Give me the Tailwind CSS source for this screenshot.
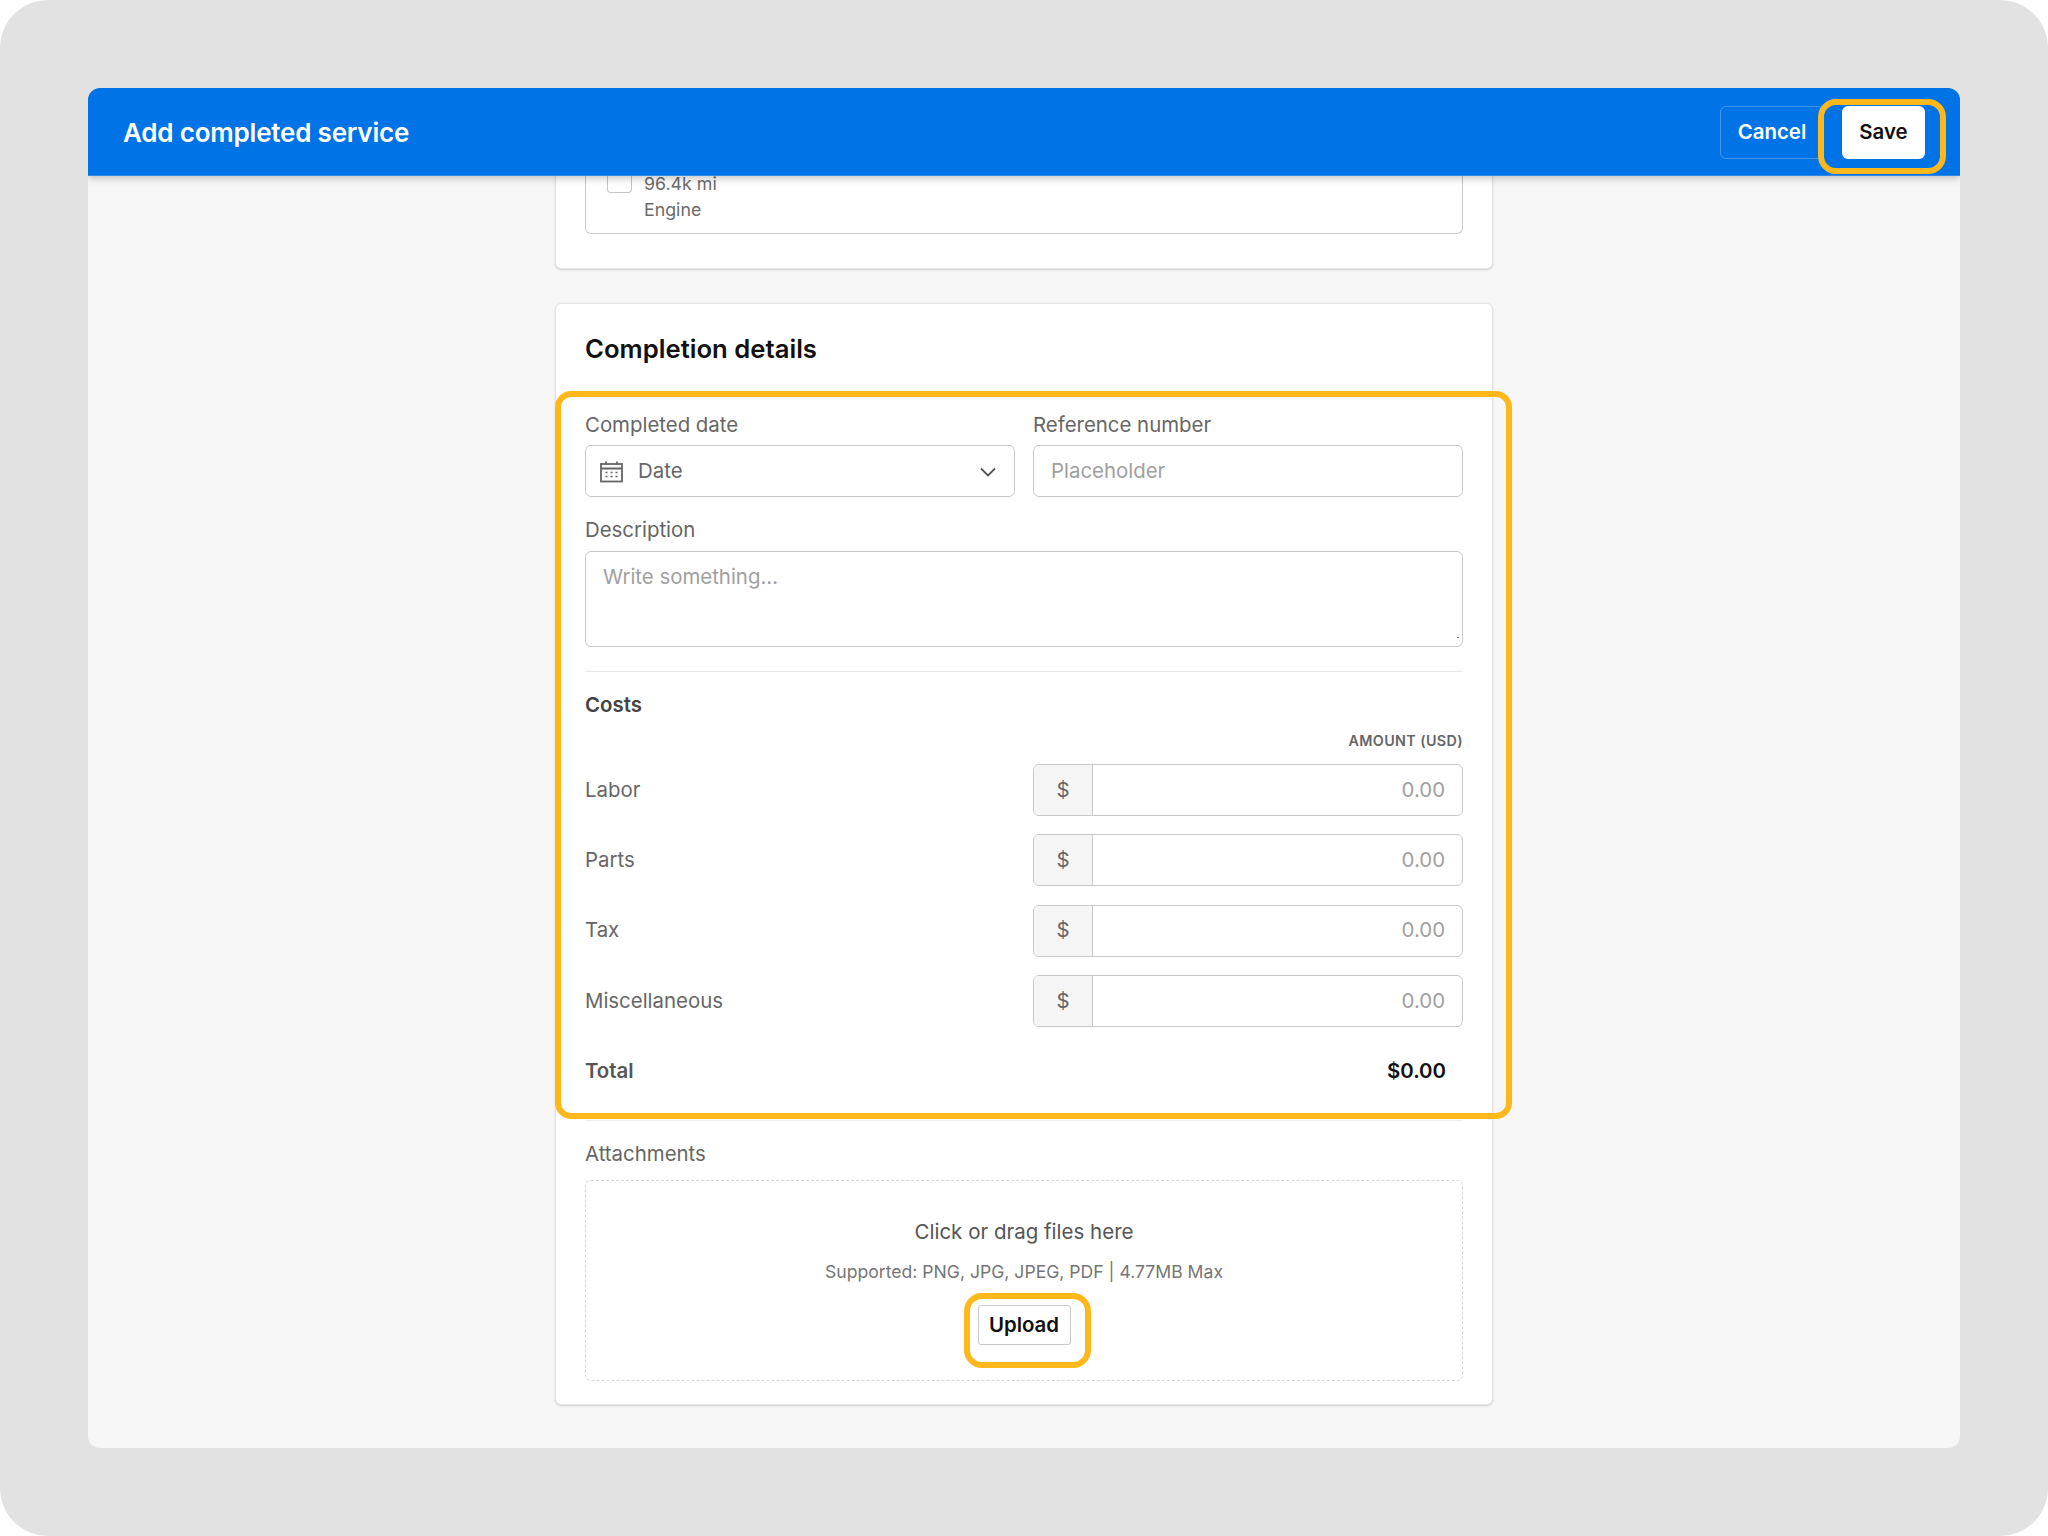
<!DOCTYPE html>
<html lang="en">
<head>
  <meta charset="UTF-8" />
  <title>Add completed service</title>
  <script src="https://cdn.jsdelivr.net/npm/@tailwindcss/browser@4"></script>
</head>
<body class="bg-white font-['Inter',sans-serif]">
  <div class="relative w-[2048px] h-[1536px] rounded-[48px] bg-[#e2e2e2] p-[88px]">
    <div class="flex flex-col w-[1872px] h-[1360px] rounded-[12px] bg-[#f7f7f7] overflow-hidden">
      <header class="relative z-10 flex items-center justify-between shrink-0 h-[88px] bg-[#0073e6] border-b border-[#2f8aeb] pt-px pl-[35px] pr-[35px] shadow-[0_2px_8px_rgba(0,0,0,0.25)]">
        <h1 class="text-[26px] font-semibold text-white tracking-[-0.2px]">Add completed service</h1>
        <div class="flex gap-[18px] items-center">
          <button class="h-[53px] w-[104px] rounded-[6px] border border-white/25 text-[20.4px] font-semibold text-white">Cancel</button>
          <button class="h-[53px] w-[83px] rounded-[6px] bg-white text-[20.4px] font-semibold text-[#111]">Save</button>
        </div>
      </header>
      <main class="flex flex-col items-center gap-[34px] -mt-[1px]">
        <section class="w-[938px] h-[94px] rounded-b-[6px] bg-white px-[29px] border-x border-b border-[#e4e4e4] shadow-[0_1px_2px_rgba(0,0,0,0.15)]">
          <div class="flex gap-[12px] h-[59px] rounded-b-[6px] border-x border-b border-[#c9c9c9] pl-[21px]">
            <span class="w-[25px] h-[18px] rounded-b-[4px] border-x border-b border-[#c4c4c4]"></span>
            <div class="-mt-[4px] text-[17.8px] leading-[26px] text-[#6b6b6b]">
              <p class="h-[26px]">96.4k mi</p>
              <p>Engine</p>
            </div>
          </div>
        </section>
        <section class="w-[938px] h-[1102px] rounded-[6px] bg-white px-[29px] pt-[29px] border border-[#e4e4e4] shadow-[0_1px_2px_rgba(0,0,0,0.15)]">
          <h2 class="h-[32px] text-[25.7px] leading-[32px] font-semibold text-[#111]">Completion details</h2>
          <div class="grid grid-cols-2 gap-x-[18px] mt-[47px]">
            <div>
              <label class="block h-[26px] mb-[7px] text-[20.4px] leading-[26px] text-[#666]">Completed date</label>
              <div class="flex items-center h-[52px] rounded-[6px] border border-[#c9c9c9] pt-px pl-[14px] pr-[18px] text-[20.4px] text-[#666]">
                <svg class="w-[23px] h-[22px] mr-[15px]" viewBox="0 0 23 22" fill="none" stroke="#666" stroke-width="1.8">
                  <rect x="1" y="3" width="21" height="17.5" />
                  <path d="M1 7.5h21M6 0.5v3M17 0.5v3" />
                  <path d="M5.5 11.5h2M10.5 11.5h2M15.5 11.5h2M5.5 15.5h2M10.5 15.5h2M15.5 15.5h2" stroke-width="1.5" />
                </svg>
                <span class="flex-1">Date</span>
                <svg class="w-[16px] h-[10px]" viewBox="0 0 16 10" fill="none" stroke="#555" stroke-width="1.8"><path d="M1 1.5l7 7 7-7" /></svg>
              </div>
            </div>
            <div>
              <label class="block h-[26px] mb-[7px] text-[20.4px] leading-[26px] text-[#666]">Reference number</label>
              <div class="flex items-center h-[52px] rounded-[6px] border border-[#c9c9c9] pt-px px-[17px] text-[20.4px] text-[#a0a0a0]">Placeholder</div>
            </div>
          </div>
          <label class="block h-[26px] mt-[20px] mb-[8px] text-[20.4px] leading-[26px] text-[#666]">Description</label>
          <div class="relative h-[96px] rounded-[6px] border border-[#c9c9c9] px-[17px] pt-[12px] text-[20.4px] leading-[26px] text-[#a0a0a0]">
            Write something...
            <span class="absolute right-[3px] bottom-[8px] w-[2px] h-[1px] bg-[#777]"></span>
          </div>
          <div class="h-px mt-[24px] bg-[#e8e8e8]"></div>
          <h3 class="h-[26px] mt-[20px] text-[20.4px] leading-[26px] font-semibold text-[#444]">Costs</h3>
          <p class="h-[20px] mt-[13px] text-right text-[14.3px] leading-[20px] font-semibold tracking-[0.4px] text-[#666]">AMOUNT (USD)</p>
          <div class="flex flex-col gap-[18.3px] mt-[13px]">
            <div class="flex items-center justify-between h-[52px]">
              <span class="text-[20.4px] text-[#666]">Labor</span>
              <div class="flex w-[430px] h-[52px] rounded-[6px] border border-[#c9c9c9] overflow-hidden text-[20.4px]">
                <span class="flex items-center justify-center w-[59px] bg-[#f5f5f5] border-r border-[#c9c9c9] text-[#666]">$</span>
                <span class="flex flex-1 items-center justify-end pr-[17px] text-[#a0a0a0]">0.00</span>
              </div>
            </div>
            <div class="flex items-center justify-between h-[52px]">
              <span class="text-[20.4px] text-[#666]">Parts</span>
              <div class="flex w-[430px] h-[52px] rounded-[6px] border border-[#c9c9c9] overflow-hidden text-[20.4px]">
                <span class="flex items-center justify-center w-[59px] bg-[#f5f5f5] border-r border-[#c9c9c9] text-[#666]">$</span>
                <span class="flex flex-1 items-center justify-end pr-[17px] text-[#a0a0a0]">0.00</span>
              </div>
            </div>
            <div class="flex items-center justify-between h-[52px]">
              <span class="text-[20.4px] text-[#666]">Tax</span>
              <div class="flex w-[430px] h-[52px] rounded-[6px] border border-[#c9c9c9] overflow-hidden text-[20.4px]">
                <span class="flex items-center justify-center w-[59px] bg-[#f5f5f5] border-r border-[#c9c9c9] text-[#666]">$</span>
                <span class="flex flex-1 items-center justify-end pr-[17px] text-[#a0a0a0]">0.00</span>
              </div>
            </div>
            <div class="flex items-center justify-between h-[52px]">
              <span class="text-[20.4px] text-[#666]">Miscellaneous</span>
              <div class="flex w-[430px] h-[52px] rounded-[6px] border border-[#c9c9c9] overflow-hidden text-[20.4px]">
                <span class="flex items-center justify-center w-[59px] bg-[#f5f5f5] border-r border-[#c9c9c9] text-[#666]">$</span>
                <span class="flex flex-1 items-center justify-end pr-[17px] text-[#a0a0a0]">0.00</span>
              </div>
            </div>
            <div class="flex items-center justify-between h-[52px] pr-[17px]">
              <span class="text-[20.4px] font-semibold text-[#555]">Total</span>
              <span class="text-[20.4px] font-semibold text-[#111]">$0.00</span>
            </div>
          </div>
          <div class="h-px mt-[23px] bg-[#eeeeee]"></div>
          <label class="block h-[26px] mt-[20px] text-[20.4px] leading-[26px] text-[#666]">Attachments</label>
          <div class="flex flex-col items-center h-[201px] mt-[13px] rounded-[6px] border border-dashed border-[#d6d6d6]">
            <p class="mt-[37px] text-[20.5px] leading-[28px] text-[#555]">Click or drag files here</p>
            <p class="mt-[14px] text-[17.6px] leading-[24px] text-[#757575]">Supported: PNG, JPG, JPEG, PDF | 4.77MB Max</p>
            <button class="mt-[21px] w-[93px] h-[40px] rounded-[3px] border border-[#c9c9c9] text-[20.4px] font-semibold text-[#111]">Upload</button>
          </div>
        </section>
      </main>
    </div>
    <!-- highlight rings -->
    <div class="absolute z-20 left-[1818px] top-[99px] w-[128px] h-[75px] rounded-[18px] border-[6px] border-[#ffb81c]"></div>
    <div class="absolute z-20 left-[555px] top-[391px] w-[957px] h-[728px] rounded-[16px] border-[6px] border-[#ffb81c]"></div>
    <div class="absolute z-20 left-[964px] top-[1293px] w-[127px] h-[75px] rounded-[18px] border-[6px] border-[#ffb81c]"></div>
  </div>
</body>
</html>
